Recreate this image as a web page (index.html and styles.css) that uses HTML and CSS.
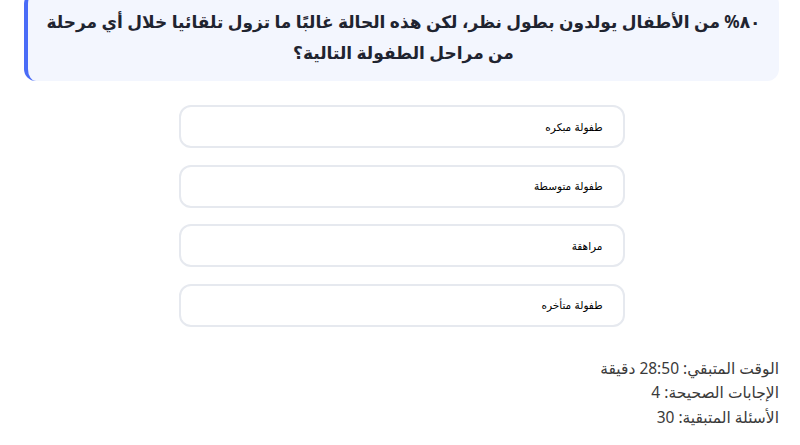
FILE: index.html
```html
<!DOCTYPE html>
<html lang="ar" dir="rtl">
<head>
    <meta charset="UTF-8">
    <meta name="viewport" content="width=device-width, initial-scale=1.0">
    <title>اختبار</title>
    <link rel="stylesheet" href="styles.css">
</head>
<body>
    <div class="quiz">
        <div class="question">
            ٨٠% من الأطفال يولدون بطول نظر، لكن هذه الحالة غالبًا ما تزول تلقائيا خلال أي مرحلة من مراحل الطفولة التالية؟
        </div>

        <div class="options">
            <button class="option">طفولة مبكره</button>
            <button class="option">طفولة متوسطة</button>
            <button class="option">مراهقة</button>
            <button class="option">طفولة متأخره</button>
        </div>

        <div class="stats">
            <p>الوقت المتبقي: 28:50 دقيقة</p>
            <p>الإجابات الصحيحة: 4</p>
            <p>الأسئلة المتبقية: 30</p>
        </div>
    </div>
</body>
</html>
```

FILE: styles.css
```css
body {
    margin: 0;
    padding: 0;
    background-color: #ffffff;
    font-family: "Noto Sans", "DejaVu Sans", sans-serif;
    color: #333;
}
.quiz {
    padding: 0 21px 0 24px;
}
.question {
    margin-top: -8px;
    padding: 14px 10px 13px;
    background-color: #f3f6fe;
    border-left: 4px solid #4a6cf7;
    border-radius: 12px;
    font-size: 17px;
    font-weight: bold;
    line-height: 31px;
    text-align: center;
    color: #1f2430;
}
.options {
    width: 446px;
    margin: 24px auto 0;
    display: flex;
    flex-direction: column;
    gap: 16.5px;
}
.option {
    height: 43px;
    padding: 0 20px;
    background-color: #fff;
    border: 2px solid #e6e9ef;
    border-radius: 12px;
    font-family: "DejaVu Sans", sans-serif;
    font-size: 10.5px;
    text-align: right;
    color: #000;
    cursor: pointer;
}
.stats {
    margin-top: 29px;
    font-size: 15.5px;
    line-height: 24.5px;
    color: #3a3a3a;
}
.stats p {
    margin: 0;
}
```
